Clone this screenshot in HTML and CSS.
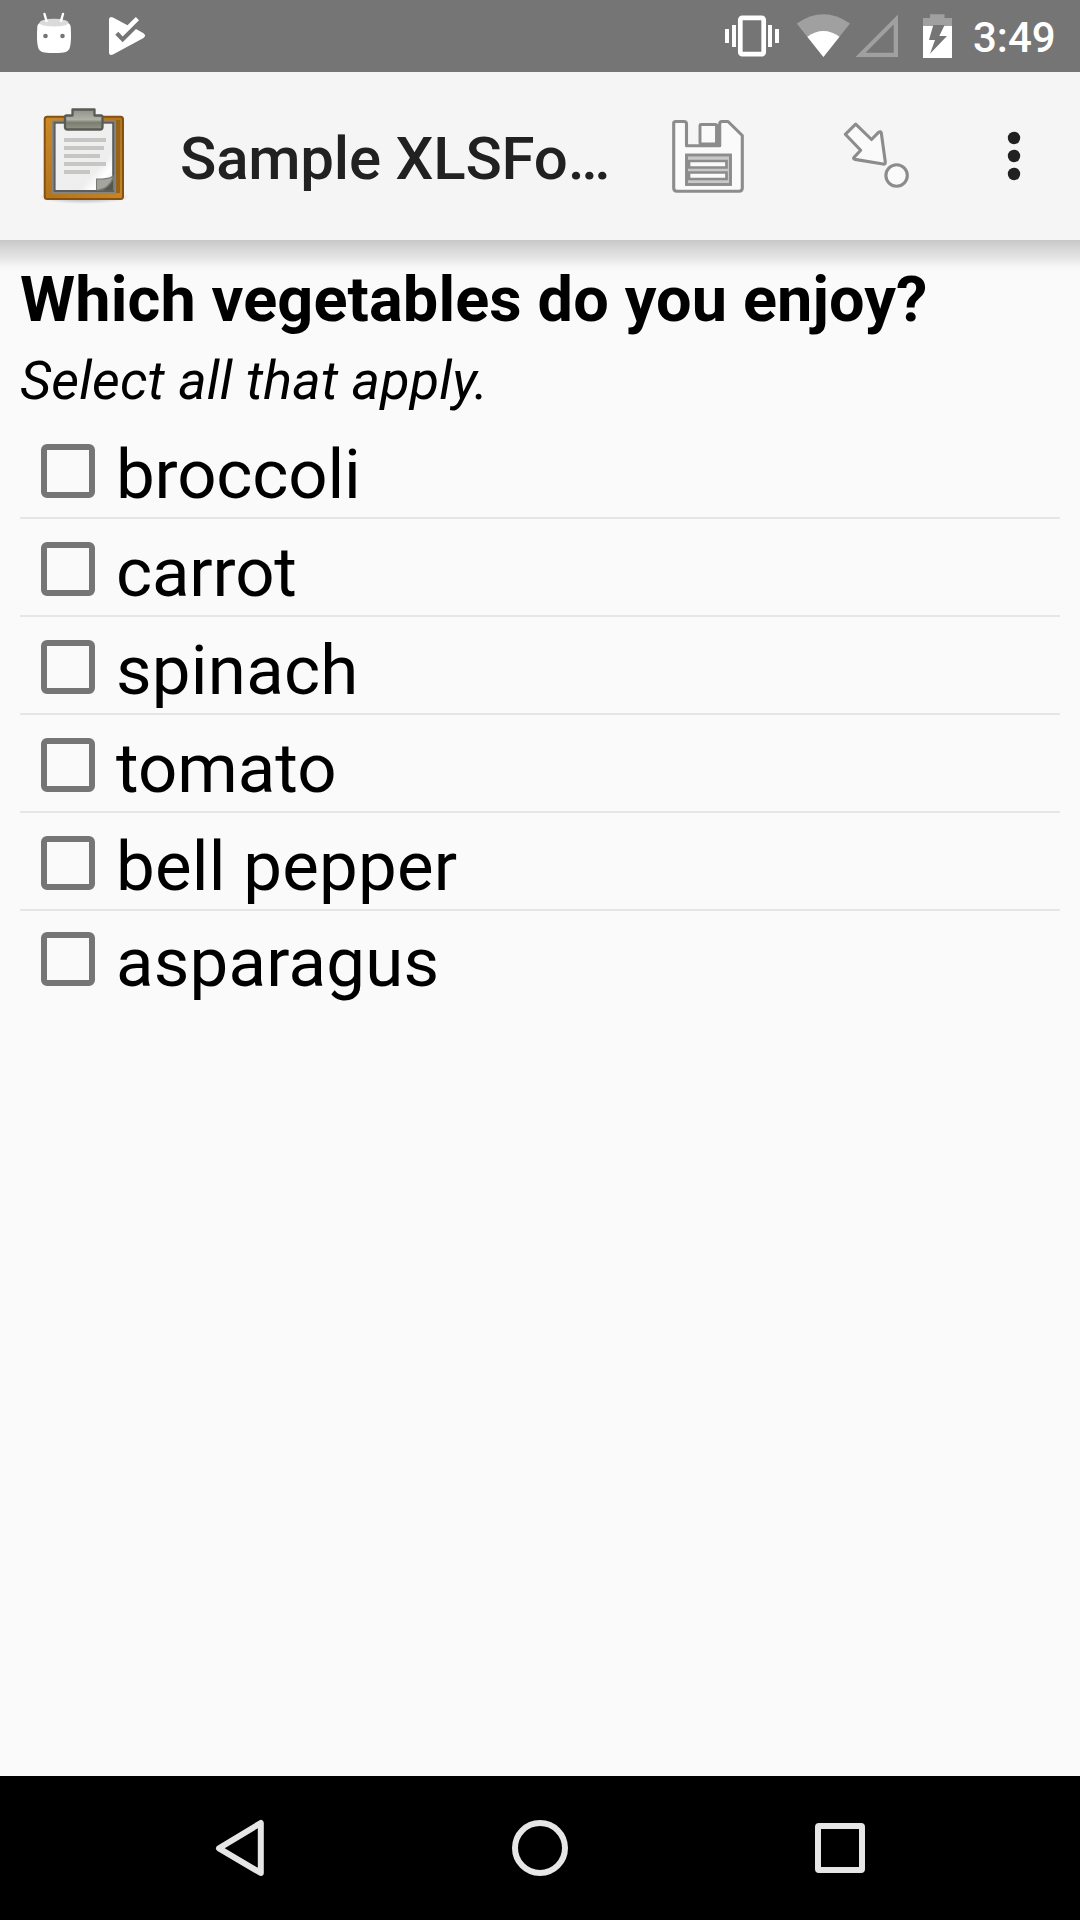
FILE: index.html
```html
<!DOCTYPE html>
<html lang="en">
<head>
<meta charset="utf-8">
<title>Sample XLSForm</title>
<link rel="stylesheet" href="styles.css">
</head>
<body>
<div class="screen">
  <header class="status">
    <svg class="status-left" width="200" height="72" viewBox="0 0 200 72">
      <path d="M44.500 14L46.500 21M63 14L61 21" stroke="#fff" stroke-width="2.400" stroke-linecap="round"/>
      <path d="M37.300 27C37.300 24 40 22.500 43 22H65C68 22.500 70.700 24 70.700 27C71.300 35 71.200 42 70 47C69.300 50.500 67 52 63.500 52.400Q54 53.600 44.500 52.400C41 52 38.700 50.500 38 47C36.800 42 36.700 35 37.300 27Z" fill="#fff"/>
      <ellipse cx="54" cy="22.700" rx="14.500" ry="3.900" fill="#dadada"/>
      <path d="M46.700 22L46 19M60.800 22L61.500 19" stroke="#fff" stroke-width="2.400"/>
      <circle cx="45.500" cy="36" r="2.300" fill="#757575"/><circle cx="62.500" cy="36" r="2.300" fill="#757575"/>
      <path d="M109 19.500Q109 16 113 17.400L127.500 25.300L135.800 17L139 20.200L122.700 36.500L118.300 31.800L115.300 34.800L122.700 42.300L136 29L143.500 33.200Q146.600 35.500 143.500 38L113 54.600Q109 56 109 52.500Z" fill="#fff"/>
    </svg>
    <svg class="status-icons" width="262" height="72" viewBox="700 0 262 72">
      <path d="M725 29h4v14h-4zM732 25h4v22h-4zM768 25h4v22h-4zM775 29h4v14h-4z" fill="#fff"/>
      <rect x="740.300" y="17.800" width="23.400" height="36.400" rx="2" fill="none" stroke="#fff" stroke-width="4.700"/>
      <path d="M796.700 23.500Q823.500 5 850 23.500L823.400 57Z" fill="#a0a0a0"/>
      <path d="M807.300 36.700Q823.400 25.500 839.500 36.700L823.400 57Z" fill="#fff"/>
      <path d="M855.500 57L898 14.500V57ZM865.500 52.700H893.700V24.500Z" fill="#a0a0a0" fill-rule="evenodd"/>
      <path d="M923 26V18H930V14.300H944.500V18H952V26Z" fill="#a0a0a0"/>
      <path d="M923 26H952V58H923Z" fill="#fff"/>
      <path d="M933.300 25H944.600L939.300 36H947L930 53.700L935 40H929Z" fill="#757575"/>
    </svg>
    <span class="clock">3:49</span>
  </header>
  <div class="appbar">
    <svg class="logo" width="100" height="110" viewBox="35 100 100 110">
      <defs>
        <linearGradient id="wood" x1="0" y1="0" x2="1" y2="1"><stop offset="0" stop-color="#cd8b27"/><stop offset=".5" stop-color="#b3741d"/><stop offset="1" stop-color="#c98525"/></linearGradient>
        <linearGradient id="paper" x1="0" y1="0" x2="1" y2="1"><stop offset="0" stop-color="#f1f1f1"/><stop offset=".7" stop-color="#eee"/><stop offset=".82" stop-color="#fff"/><stop offset="1" stop-color="#ddd"/></linearGradient>
        <linearGradient id="clip" x1="0" y1="0" x2="0" y2="1"><stop offset="0" stop-color="#8f9087"/><stop offset=".5" stop-color="#b0b1a6"/><stop offset=".65" stop-color="#7c7e72"/><stop offset="1" stop-color="#929486"/></linearGradient>
        <radialGradient id="ground"><stop offset="0" stop-color="#000" stop-opacity=".35"/><stop offset="1" stop-color="#000" stop-opacity="0"/></radialGradient>
      </defs>
      <ellipse cx="84" cy="197" rx="46" ry="7" fill="url(#ground)"/>
      <rect x="44.700" y="116.700" width="78.300" height="82.300" rx="2.500" fill="url(#wood)" stroke="#845110" stroke-width="2"/>
      <path d="M116 120h4v73H58v-3h58z" fill="#96631b"/>
      <rect x="52" y="120.500" width="64" height="73.500" fill="#868681"/>
      <rect x="54.600" y="122.700" width="58.600" height="68.300" fill="url(#paper)" stroke="#5c5d60" stroke-width="2"/>
      <path d="M64 138h42v4H64zM64 146h40v4H64zM64 154h36v4H64zM64 162h42v4H64zM64 170h26v4H64z" fill="#c6c6c5"/>
      <path d="M96 190.500V178.500H102Q110 178 114 175V190.500Z" fill="#777973"/>
      <path d="M97 190V179.500H103Q109 179 112.500 177.500Q109 188 97 190Z" fill="#a3a59e"/>
      <path d="M102 190.500Q110 187 113 180V190.500Z" fill="#55574f"/>
      <path d="M72.500 109.500H94.500V115.500H101Q102.500 115.500 102.500 117V127Q102.500 129.500 100 129.500H67.500Q65 129.500 65 127V117Q65 115.500 66.500 115.500H72.500Z" fill="url(#clip)" stroke="#5a5b55" stroke-width="2.300" stroke-linejoin="round"/>
    </svg>
    <h1 class="title">Sample XLSFo…</h1>
    <svg class="save" width="84" height="84" viewBox="666 114 84 84">
      <path d="M673.700 123Q673.700 121.500 676 121.500H684Q686.500 121.500 686.500 124V145.800H719.700V124Q719.700 121.500 722 121.500H728L742.300 135.500V188Q742.300 191.200 739 191.200H677Q673.700 191.200 673.700 188Z" fill="#fafafa" stroke="#8c8c8c" stroke-width="3.100" stroke-linejoin="round"/>
      <rect x="700" y="124.500" width="16.500" height="19.500" rx="1" fill="#fafafa" stroke="#8c8c8c" stroke-width="2.900"/>
      <path d="M718.300 124V145" stroke="#8c8c8c" stroke-width="2.800"/>
      <rect x="686.500" y="155" width="44" height="29.500" fill="#c8c8c8" stroke="#8c8c8c" stroke-width="2.900"/>
      <path d="M689 161H726.500V167.500H689ZM689 172.500H726.500V179H689Z" fill="#fafafa" stroke="#8c8c8c" stroke-width="2.700"/>
    </svg>
    <svg class="jump" width="84" height="84" viewBox="833 114 84 84">
      <path d="M855.700 124.100L845.300 134.300L860.700 150.300L853.800 157.600Q853 159 855 159.400L883 164Q885.500 164.500 885.300 162L881.300 133Q880.800 130.800 878.500 132.300L871.500 139.500Z" fill="#fafafa" stroke="#8c8c8c" stroke-width="3.100" stroke-linejoin="round"/>
      <circle cx="896.600" cy="175.500" r="10.700" fill="#fafafa" stroke="#8c8c8c" stroke-width="3.100"/>
    </svg>
    <svg class="more" width="14" height="50" viewBox="0 0 14 50"><circle cx="7" cy="7" r="6.200"/><circle cx="7" cy="25" r="6.200"/><circle cx="7" cy="43" r="6.200"/></svg>
  </div>
  <main class="form">
    <h2 class="question">Which vegetables do you enjoy?</h2>
    <p class="hint">Select all that apply.</p>
    <ul class="choices">
      <li class="choice"><span class="box"></span><span class="label tight">broccoli</span></li>
      <li class="choice"><span class="box"></span><span class="label tight">carrot</span></li>
      <li class="choice"><span class="box"></span><span class="label loose">spinach</span></li>
      <li class="choice"><span class="box"></span><span class="label">tomato</span></li>
      <li class="choice"><span class="box"></span><span class="label loose">bell pepper</span></li>
      <li class="choice"><span class="box"></span><span class="label loose">asparagus</span></li>
    </ul>
  </main>
  <nav class="nav">
    <svg width="60" height="60" viewBox="210 1818 60 60"><path d="M219 1848.300L260.800 1823V1873Z"/></svg>
    <svg width="60" height="60" viewBox="510 1818 60 60"><circle cx="540" cy="1848" r="25"/></svg>
    <svg width="60" height="60" viewBox="810 1818 60 60"><rect x="818" y="1826" width="44" height="44" rx="1"/></svg>
  </nav>
</div>
</body>
</html>
```
FILE: styles.css
```css
* { box-sizing: border-box; }
body, h1, h2, p, ul { margin: 0; padding: 0; }
body { font-family: Roboto, sans-serif; background: #fafafa; }
svg { display: block; flex: none; }
.screen { width: 1080px; height: 1920px; display: flex; flex-direction: column; overflow: hidden; }
.status { height: 72px; background: #757575; display: flex; flex: none; }
.status-icons { margin-left: auto; }
.clock { width: 118px; padding-left: 11px; color: #fff; font-size: 42px; font-weight: 500; line-height: 75px; white-space: nowrap; }
.appbar { height: 168px; flex: none; background: #f5f5f5; display: flex; align-items: center; padding-left: 35px; }
.logo { margin-top: -2px; }
.title { margin-left: 45px; width: 450px; font-size: 60px; font-weight: 500; line-height: 70px; letter-spacing: -0.2px; padding-top: 5px; color: #212121; white-space: nowrap; }
.save { margin-left: 36px; }
.jump { margin-left: 83px; }
.more { margin-left: 90px; fill: #212121; }
.form { flex: 1; padding: 21px 20px 0; background: linear-gradient(#c8c8c8, #d9d9d9 10px, #e5e5e5 18px, #f5f5f5 26px, #fafafa 31px) no-repeat 0 0 / 100% 31px; }
.question { font-size: 63px; font-weight: 700; line-height: 78px; letter-spacing: 0.12px; color: #000; white-space: nowrap; }
.hint { margin-top: 10px; font-size: 54px; font-style: italic; line-height: 64px; letter-spacing: 0.14px; color: #000; }
.choices { list-style: none; margin-top: 8px; }
.choice { height: 98px; border-bottom: 2px solid #e6e6e6; display: flex; padding-left: 21px; }
.choice:last-child { height: 94px; margin-top: -2px; border-bottom: 0; }
.box { width: 54px; height: 54px; margin-top: 23px; border: 6px solid #757575; border-radius: 6px; }
.label { margin-left: 21px; padding-top: 11px; font-size: 69px; line-height: 85px; color: #000; }
.tight { letter-spacing: -0.15px; }
.loose { letter-spacing: 0.23px; }
.nav { height: 144px; flex: none; background: #000; display: flex; justify-content: center; align-items: center; gap: 240px; }
.nav svg { fill: none; stroke: #e6e6e6; stroke-width: 6; stroke-linejoin: round; }
```
